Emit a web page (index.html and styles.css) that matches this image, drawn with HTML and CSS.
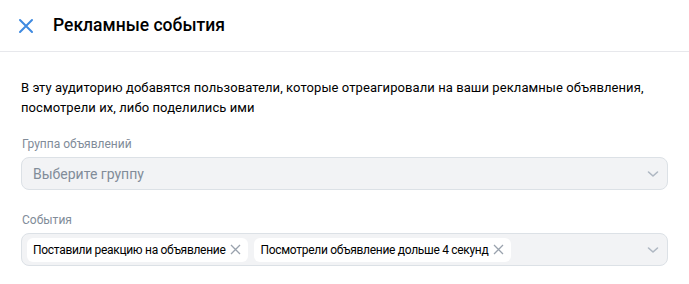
FILE: index.html
```html
<!DOCTYPE html>
<html lang="ru">
<head>
<meta charset="utf-8">
<link rel="stylesheet" href="styles.css">
</head>
<body>
<div class="header">
  <svg class="close" width="16" height="16" viewBox="0 0 16 16"><path d="M2 2 L14 14 M14 2 L2 14" stroke="#3f8ae0" stroke-width="2" stroke-linecap="round" fill="none"/></svg>
  <div class="title">Рекламные события</div>
</div>
<div class="content">
  <p class="desc">В эту аудиторию добавятся пользователи, которые отреагировали на ваши рекламные объявления, посмотрели их, либо поделились ими</p>
  <div class="field">
    <div class="label">Группа объявлений</div>
    <div class="select">
      <span class="placeholder">Выберите группу</span>
      <svg class="chev" width="12" height="8" viewBox="0 0 12 8"><path d="M1.5 2 L6 6 L10.5 2" stroke="#aeb7c2" stroke-width="1.6" fill="none" stroke-linecap="round" stroke-linejoin="round"/></svg>
    </div>
  </div>
  <div class="field">
    <div class="label">События</div>
    <div class="select multi">
      <div class="chips">
        <span class="chip">Поставили реакцию на объявление<svg class="x" width="11" height="11" viewBox="0 0 11 11"><path d="M1 1 L10 10 M10 1 L1 10" stroke="#99a2ad" stroke-width="1.3" fill="none"/></svg></span>
        <span class="chip">Посмотрели объявление дольше 4 секунд<svg class="x" width="11" height="11" viewBox="0 0 11 11"><path d="M1 1 L10 10 M10 1 L1 10" stroke="#99a2ad" stroke-width="1.3" fill="none"/></svg></span>
      </div>
      <svg class="chev" width="12" height="8" viewBox="0 0 12 8"><path d="M1.5 2 L6 6 L10.5 2" stroke="#aeb7c2" stroke-width="1.6" fill="none" stroke-linecap="round" stroke-linejoin="round"/></svg>
    </div>
  </div>
</div>
</body>
</html>
```
FILE: styles.css
```css
* { box-sizing: border-box; }
body {
  margin: 0;
  background: #fff;
  font-family: Roboto, "Liberation Sans", sans-serif;
  color: #000;
  width: 689px;
  height: 284px;
  overflow: hidden;
}
.header {
  height: 52px;
  display: flex;
  align-items: center;
  padding-left: 18px;
  border-bottom: 1px solid #e7e8ec;
}
.close { margin-right: 19px; }
.title {
  font-size: 17.5px;
  font-weight: 500;
  color: #000;
  padding-bottom: 2px;
}
.content {
  padding: 26px 21px 0 21px;
}
.desc {
  margin: 0;
  font-size: 13px;
  line-height: 20px;
  letter-spacing: 0.08px;
  color: #000;
}
.field { margin-top: 19px; }
.field + .field { margin-top: 23px; }
.label {
  font-size: 12px;
  line-height: 14px;
  color: #818c99;
  margin-bottom: 6px;
  padding-left: 1px;
}
.select {
  width: 647px;
  height: 33px;
  background: #f2f3f5;
  border: 1px solid #dce1e6;
  border-radius: 8px;
  display: flex;
  align-items: center;
  padding: 0 8px 0 11px;
}
.placeholder {
  flex: 1;
  font-size: 14px;
  color: #818c99;
}
.multi { padding-left: 5px; }
.chips {
  flex: 1;
  display: flex;
  gap: 6px;
}
.chip {
  display: inline-flex;
  align-items: center;
  height: 24px;
  background: #fff;
  border-radius: 6px;
  padding: 0 7px 0 6px;
  font-size: 12px;
  letter-spacing: -0.3px;
  color: #000;
  gap: 5px;
}
```
